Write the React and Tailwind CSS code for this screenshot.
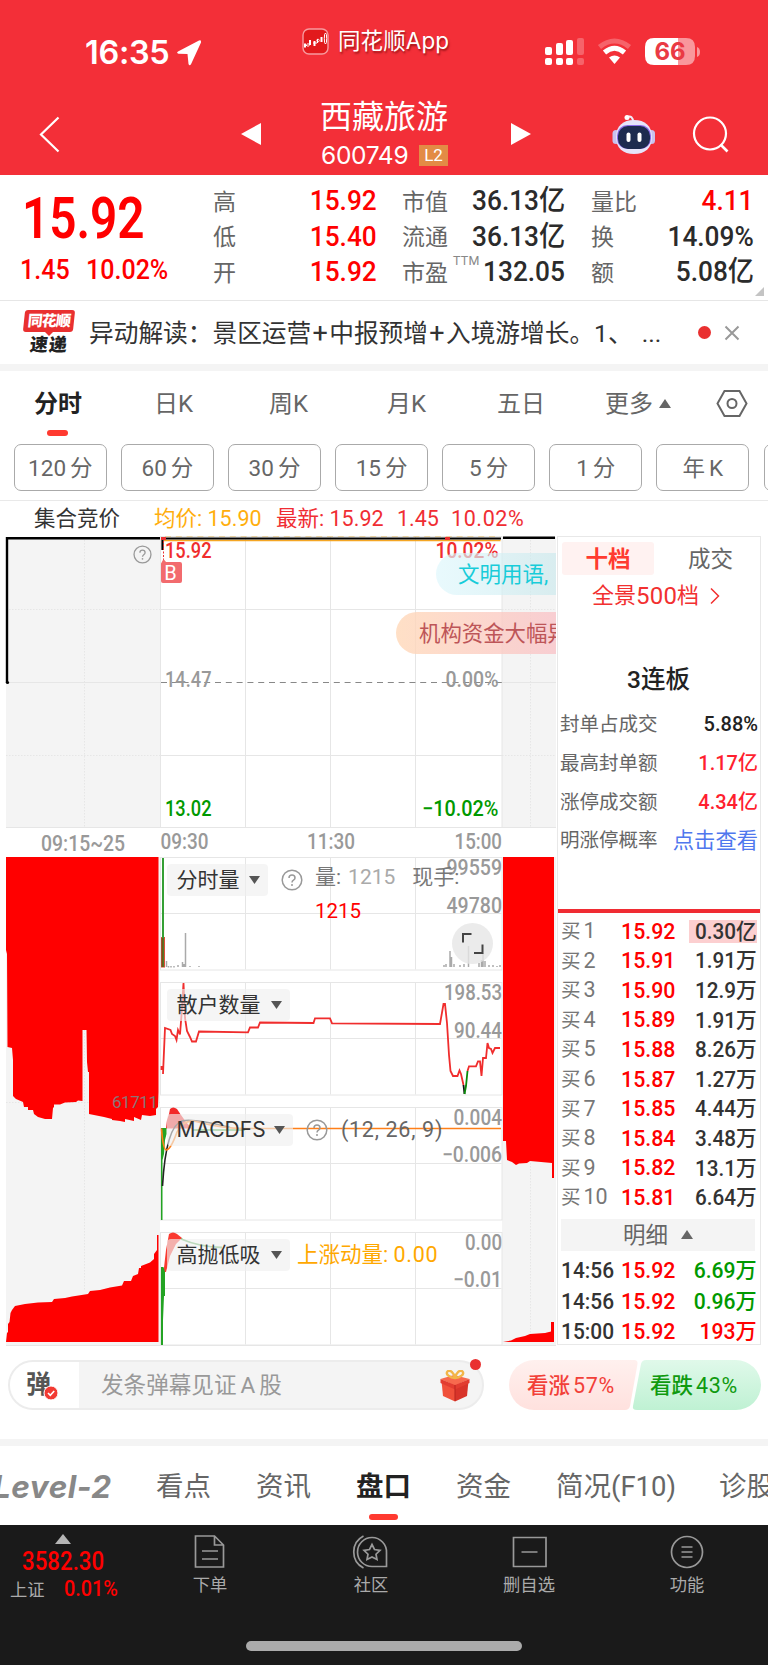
import { clsx } from 'clsx';

const PERIODS = [
  ['120', '分'],
  ['60', '分'],
  ['30', '分'],
  ['15', '分'],
  ['5', '分'],
  ['1', '分'],
  ['年', 'K'],
];

const BIDS = [
  { level: 1, price: '15.92', amount: '0.30亿' },
  { level: 2, price: '15.91', amount: '1.91万' },
  { level: 3, price: '15.90', amount: '12.9万' },
  { level: 4, price: '15.89', amount: '1.91万' },
  { level: 5, price: '15.88', amount: '8.26万' },
  { level: 6, price: '15.87', amount: '1.27万' },
  { level: 7, price: '15.85', amount: '4.44万' },
  { level: 8, price: '15.84', amount: '3.48万' },
  { level: 9, price: '15.82', amount: '13.1万' },
  { level: 10, price: '15.81', amount: '6.64万' },
];

const TRADES = [
  { time: '14:56', price: '15.92', amount: '6.69万', up: false },
  { time: '14:56', price: '15.92', amount: '0.96万', up: false },
  { time: '15:00', price: '15.92', amount: '193万', up: true },
];

const LIMIT_STATS = [
  { label: '封单占成交', value: '5.88%', color: 'text-[#222]' },
  { label: '最高封单额', value: '1.17亿', color: 'text-[#ff1f2f]' },
  { label: '涨停成交额', value: '4.34亿', color: 'text-[#ff1f2f]' },
];

// Sub charts share one size; only the top edge changes.
const SUB_CHARTS = [857.5, 982.5, 1107.5, 1232.5];

/** Status bar: clock, app name, signal, wifi and battery. */
function StatusBar() {
  return (
    <div className="flex h-[90px] items-start font-[Inter] text-white">
      <div className="mt-[33px] ml-[85px] w-[217px] flex items-center">
        <span className="text-[32.500px] leading-[40px] font-semibold tracking-[-0.3px]">16:35</span>
        <svg className="ml-[6px]" width="26" height="28" viewBox="0 0 26 28" fill="white">
          <path d="M23 1.500 L2 12.500 Q0 14 2.500 14.800 L11.500 15 L12.500 25 Q13.500 27.500 15 25.200 L25 3.500 Q25.500 0.600 23 1.500Z" />
        </svg>
      </div>
      <div className="mt-[24px] w-[243px] flex items-center">
        <svg width="27" height="27" viewBox="0 0 27 27" fill="none">
          <rect x="1" y="1" width="25" height="25" rx="6" fill="#e21a1c" stroke="#f79a9e" strokeWidth="1.4" />
          <path d="M3 15.500v4M8 12v5M12.500 13v5M19.500 9v5" stroke="white" strokeWidth="2" />
          <path d="M2 17.500h3M15.500 11v4M11 15h4" stroke="white" strokeWidth="1" />
          <circle cx="6" cy="17" r="1.300" stroke="white" strokeWidth="0.8" />
          <circle cx="16" cy="12.500" r="1.300" stroke="white" strokeWidth="0.8" />
          <ellipse cx="23.500" cy="10.500" rx="1.200" ry="5.500" stroke="white" />
        </svg>
        <span className="ml-[9px] text-[22.500px] leading-[34px] tracking-[0.1px] font-['Inter','Noto_Sans_CJK_SC',sans-serif] [text-shadow:1px_2px_2px_rgba(90,0,0,0.55)]">
          同花顺App
        </span>
      </div>
      <svg className="mt-[38px]" width="156" height="28" viewBox="0 0 156 28" fill="white">
        <rect x="0" y="9" width="7" height="8" rx="2" />
        <rect x="11" y="5" width="7" height="12" rx="2" />
        <rect x="21" y="2" width="7" height="15" rx="2" />
        <rect x="32" y="0" width="7" height="17" rx="2" opacity="0.25" />
        <rect x="0" y="20" width="7" height="7" rx="2" />
        <rect x="11" y="20" width="7" height="7" rx="2" />
        <rect x="21" y="20" width="7" height="7" rx="2" />
        <rect x="32" y="20" width="7" height="7" rx="2" opacity="0.25" />
        <path d="M54.500 9 Q69.500 -3 84.500 9" fill="none" stroke="white" strokeWidth="5" opacity="0.25" />
        <path d="M59.500 14.500 Q69.500 6 79.500 14.500" fill="none" stroke="white" strokeWidth="5" />
        <path d="M64 19.500 Q69.500 15.500 75 19.500 L69.500 26Z" />
        <path d="M109 0H133V27H109Q100 27 100 18V9Q100 0 109 0Z" />
        <path d="M133 0H141Q150 0 150 9V18Q150 27 141 27H133Z" opacity="0.5" />
        <path d="M152 9Q155 10 155 14T152 19Z" opacity="0.5" />
        <text x="125" y="22" fill="#ea3a44" fontFamily="Inter" fontWeight="700" fontSize="24" textAnchor="middle">
          66
        </text>
      </svg>
    </div>
  );
}

function RobotIcon() {
  return (
    <svg width="44" height="41" viewBox="0 0 44 41">
      <path d="M15 3 Q21 1 21 8" fill="none" stroke="#f0eefc" strokeWidth="2" />
      <circle cx="15" cy="3.500" r="2.500" fill="#fff" />
      <rect x="0.500" y="16" width="7" height="14" rx="3.500" fill="#c9c2ee" />
      <rect x="36" y="16" width="7" height="14" rx="3.500" fill="#c9c2ee" />
      <path d="M22 6C33 6 40 12 40 23S33 40 22 40 4 34 4 23 11 6 22 6Z" fill="#e6e4fa" />
      <rect x="5" y="11" width="34" height="24" rx="10.500" fill="#8a6be8" />
      <rect x="6" y="12" width="32" height="23" rx="10" fill="#1d2b4f" />
      <rect x="14.500" y="18.500" width="4" height="9.500" rx="2" fill="#fff" />
      <rect x="25.500" y="18.500" width="4" height="9.500" rx="2" fill="#fff" />
    </svg>
  );
}

function StockHeader() {
  return (
    <header className="h-[175px] shrink-0 bg-[#f32f38] text-white">
      <StatusBar />
      <div className="flex h-[85px] items-start">
        <svg className="mt-[26px] ml-[39px]" width="22" height="37" viewBox="0 0 22 37" fill="none">
          <path d="M19.500 1.500 L2 18.500 L19.500 35.500" stroke="white" strokeWidth="2.200" />
        </svg>
        <svg className="mt-[32px] ml-[180px]" width="20" height="24" viewBox="0 0 20 24" fill="white">
          <path d="M20 1V23L0 12Z" />
        </svg>
        <div className="ml-[59px] w-[129px]">
          <div className="mt-[8px] h-[38px] text-[32px] leading-[38px]">西藏旅游</div>
          <div className="mt-[7px] flex h-[25px] items-center">
            <span className="ml-[1px] font-[Inter] text-[24.500px] leading-[25px] tracking-[-0.3px]">600749</span>
            <span className="ml-auto mr-[1px] h-[21px] w-[29px] bg-[#e38b45] text-center text-[17px] leading-[21px]">L2</span>
          </div>
        </div>
        <svg className="mt-[32px] ml-[62px]" width="20" height="24" viewBox="0 0 20 24" fill="white">
          <path d="M0 1V23L20 12Z" />
        </svg>
        <div className="mt-[24px] ml-[81px]">
          <RobotIcon />
        </div>
        <svg className="mt-[26px] ml-[36px]" width="38" height="38" viewBox="0 0 38 38" fill="none">
          <circle cx="18" cy="17.500" r="16" stroke="white" strokeWidth="2.200" />
          <path d="M28.500 28.500 L35.500 35.500" stroke="white" strokeWidth="2.600" />
        </svg>
      </div>
    </header>
  );
}

/** One label / value line of the quote summary. */
function QuoteItem({ label, sup, value, red = false }) {
  return (
    <div className="flex h-[35.500px] items-center justify-between">
      <span className="relative top-[1px] text-[23px] text-[#666]">
        {label}
        {sup && <sup className="absolute top-[-2px] left-[51px] text-[12.500px] leading-none tracking-[0.3px] text-[#888]">{sup}</sup>}
      </span>
      <span className={clsx('inline-block origin-right scale-x-[0.92] text-[28.500px] font-medium', red ? 'text-[#ff0000]' : 'text-[#2b2b2b]')}>
        {value}
      </span>
    </div>
  );
}

function QuoteSummary() {
  return (
    <section className="relative flex h-[126px] shrink-0 border-b border-[#e6e6e6]">
      <div className="ml-[21px] w-[192px] text-[#ff0000]">
        <div className="mt-[14px] ml-[1px] h-[60px] origin-left scale-x-[0.83] text-[57.500px] leading-[60px] font-semibold">15.92</div>
        <div className="mt-[5px] -ml-[1px] flex h-[32px] origin-left scale-x-[0.91] gap-[18px] text-[27.500px] leading-[32px] font-medium">
          <span>1.45</span>
          <span>10.02%</span>
        </div>
      </div>
      <div className="mt-[9px] w-[164px]">
        <QuoteItem label="高" value="15.92" red />
        <QuoteItem label="低" value="15.40" red />
        <QuoteItem label="开" value="15.92" red />
      </div>
      <div className="mt-[9px] ml-[25px] w-[163px]">
        <QuoteItem label="市值" value="36.13亿" />
        <QuoteItem label="流通" value="36.13亿" />
        <QuoteItem label="市盈" sup="TTM" value="132.05" />
      </div>
      <div className="mt-[9px] ml-[26px] w-[163px]">
        <QuoteItem label="量比" value="4.11" red />
        <QuoteItem label="换" value="14.09%" />
        <QuoteItem label="额" value="5.08亿" />
      </div>
      <svg className="absolute right-[4px] bottom-[4px]" width="9" height="9" fill="#c4c4c4">
        <path d="M9 0V9H0Z" />
      </svg>
    </section>
  );
}

function NewsRow() {
  return (
    <section className="flex h-[70px] shrink-0 items-start border-b-[7px] border-[#f4f4f4]">
      <div className="mt-[9px] ml-[22px] flex w-[54px] flex-col items-center">
        <div className="h-[22px] w-[50px] -skew-x-6 rounded-[3px] bg-[#e93030] text-center text-[15px] leading-[22px] font-black tracking-[-0.8px] text-white">
          同花顺
        </div>
        <div className="h-0 w-0 border-x-[4px] border-t-[4px] border-x-transparent border-t-[#e93030]" />
        <div className="-mt-[1px] h-[20px] -skew-x-6 text-[18px] leading-[20px] font-black tracking-[1px] text-[#222]">速递</div>
      </div>
      <div className="mt-[15px] ml-[13px] w-[601px] text-[24.700px] leading-[34px] whitespace-nowrap text-[#333]">
        异动解读：景区运营
        <span className="inline-block w-[18px] text-center text-[27px]">+</span>
        中报预增
        <span className="inline-block w-[18px] text-center text-[27px]">+</span>
        入境游增长。1、
        <span className="ml-[9px]">...</span>
      </div>
      <div className="mt-[25px] ml-[8px] h-[13px] w-[13px] rounded-full bg-[#e93030]" />
      <svg className="mt-[24px] ml-[13px]" width="16" height="16" viewBox="0 0 16 16">
        <path d="M1.500 1.500L14.500 14.500M14.500 1.500L1.500 14.500" stroke="#999" strokeWidth="2" />
      </svg>
    </section>
  );
}

function PeriodTabs() {
  return (
    <section className="h-[130px] shrink-0 overflow-hidden border-b border-[#e9e9e9] text-[24px] text-[#666]">
      <div className="flex h-[73px] items-start">
        <div className="ml-[34px] w-[120px]">
          <div className="mt-[16px] leading-[34px] font-bold text-[#222]">分时</div>
          <div className="mt-[9px] ml-[13px] h-[6px] w-[21px] rounded-[3px] bg-[#ff3a30]" />
        </div>
        <div className="mt-[16px] w-[115px] leading-[34px]">日K</div>
        <div className="mt-[16px] w-[118px] leading-[34px]">周K</div>
        <div className="mt-[16px] w-[110px] leading-[34px]">月K</div>
        <div className="mt-[16px] w-[108px] leading-[34px]">五日</div>
        <div className="mt-[16px] flex w-[111px] items-center leading-[34px]">
          更多
          <svg className="ml-[6px]" width="12" height="10" fill="#666">
            <path d="M6 0L12 9H0Z" />
          </svg>
        </div>
        <svg className="mt-[18px]" width="32" height="29" viewBox="0 0 32 29" fill="none" stroke="#666" strokeWidth="2">
          <path d="M8.500 2H23.500L30.500 14.500L23.500 27H8.500L1.500 14.500Z" />
          <circle cx="16" cy="14.500" r="4.500" />
        </svg>
      </div>
      <div className="flex gap-[14.400px] pl-[14px]">
        {PERIODS.map(([amount, unit]) => (
          <div
            key={amount}
            className="flex h-[47px] w-[92.700px] shrink-0 justify-center gap-[4px] rounded-[7px] border border-[#aaa] text-[22.500px] leading-[46px]"
          >
            <span>{amount}</span>
            <span>{unit}</span>
          </div>
        ))}
        <div className="h-[47px] w-[92.700px] shrink-0 rounded-[7px] border border-[#aaa]" />
      </div>
    </section>
  );
}

function AxisText({ x, y, w, end = false, fill = '#999', size = 21.5, weight = 500, children }) {
  return (
    <text
      x={x}
      y={y}
      fill={fill}
      fontSize={size}
      fontWeight={weight}
      textLength={w}
      lengthAdjust="spacingAndGlyphs"
      textAnchor={end ? 'end' : 'start'}
    >
      {children}
    </text>
  );
}

/** Draws grids, price line, auction volumes and all four indicators. */
function ChartCanvas() {
  return (
    <svg width="557" height="810" viewBox="0 536 557 810" fontFamily="Roboto, 'Noto Sans CJK SC', sans-serif">
      {/* auction backgrounds */}
      <g fill="#f4f4f4">
        <rect x="6" y="537" width="154.500" height="290" />
        <rect x="6" y="857" width="154" height="489" />
        <rect x="502" y="537" width="54" height="290" />
        <rect x="502" y="857" width="54" height="489" />
      </g>

      {/* grid */}
      <g stroke="#e6e6e6" fill="none">
        <rect x="160.500" y="536.500" width="341.500" height="291" />
        <path d="M6 827.500H556M160.500 609.500H502M160.500 755.500H502M6 682.500H160M502 682.500H556" />
        <path d="M245.500 537V827M330.500 537V827M415.500 537V827" />
        {SUB_CHARTS.map((top) => (
          <g key={top}>
            <rect x="160.500" y={top} width="341.500" height="112.500" />
            <path d={`M245.500 ${top}v112M330.500 ${top}v112M415.500 ${top}v112M160.500 ${top + 56}h341`} />
          </g>
        ))}
        <path d="M6 1345.500H556" />
        <path
          d="M84.500 537V827M530.500 537V827M6 609.500H160M6 755.500H160M502 609.500H556M502 755.500H556M84.500 1030V1290M530.500 1160V1340M6 1102.500H160"
          strokeDasharray="1.500 1.500"
        />
      </g>

      {/* price line */}
      <path d="M161 682.500H502" stroke="#888" strokeDasharray="6 4.800" strokeWidth="1.200" />
      <path d="M165 536.500H500" stroke="#e5cfa0" strokeDasharray="6 4.800" />
      <path d="M164 540.500H500.500" stroke="#f5a623" strokeWidth="1.600" />
      <path d="M162.500 550V538.500H501" stroke="#000" strokeWidth="2.200" fill="none" />
      <path d="M7 683V538.300H160M503 537.800H555" stroke="#000" strokeWidth="2.400" fill="none" />
      <circle cx="7.500" cy="682.500" r="1.600" />
      <rect x="161" y="537" width="5" height="3" fill="#e93030" />
      <rect x="445" y="537" width="5" height="3" fill="#e93030" />
      <path d="M163.500 541V560" stroke="#e93030" strokeDasharray="2 1.500" />

      <AxisText x="165" y="557.500" w="46.500" fill="#f02d2d">15.92</AxisText>
      <AxisText x="498.500" y="557.500" w="63" fill="#f02d2d" end>10.02%</AxisText>
      <AxisText x="165" y="686.500" w="46.500">14.47</AxisText>
      <AxisText x="498.500" y="686.500" w="53" end>0.00%</AxisText>
      <AxisText x="165" y="815.500" w="46.500" fill="#009900">13.02</AxisText>
      <AxisText x="498.500" y="815.500" w="76.500" fill="#009900" end>−10.02%</AxisText>
      <AxisText x="41" y="850.500" w="84">09:15~25</AxisText>
      <AxisText x="160.500" y="849" w="48">09:30</AxisText>
      <AxisText x="307" y="849" w="48">11:30</AxisText>
      <AxisText x="502" y="849" w="47.500" end>15:00</AxisText>

      <path d="M161 563.500L163.500 559L166 562H180Q182 562 182 564V581Q182 583 180 583H163Q161 583 161 581Z" fill="#f26b6e" />
      <text x="170.500" y="580" fill="white" fontSize="20" textAnchor="middle">B</text>

      {/* unmatched auction volume */}
      <path
        fill="#ff0000"
        d="M6 857H158.500V1092L158 1107L156 1109V1115L150 1116L142 1115L141 1120L134 1117V1121L125 1119V1122L120 1121L112 1120V1119L104 1117L89 1114V1072H88L87 1062L86.500 1030H82.500V1101L78 1100.500L76 1102L65 1102.500L60 1104.500L54 1104.500V1107L53 1108L52 1119H45L38 1117L34 1114L33 1110H28V1107H24L23 1102L16 1099L13 1096V1060L12 1048L7.500 1047L7 954L6 950Z"
      />
      <path fill="#ff0000" d="M503 857H554V1178H552V1163L541 1162L530 1161L527 1163L519 1163.500L516 1165L512 1162L507 1160L506 1141H503Z" />
      <path
        fill="#ff0000"
        d="M6 1342L7 1333L8 1332V1324L9.500 1322L10.500 1313L12 1310L15 1306L25 1304L38 1302.500L52 1302L54 1299L65 1298L72 1296.500L88 1294L90 1291L100 1290L110 1287.500L122 1285.500L124 1281H131L133 1276L138 1274L139 1268H141V1266L150 1262.500L154 1259V1254L157 1250V1235H158.500V1342Z"
      />
      <path fill="#ff0000" d="M503 1342L511 1340.500L516 1338L525 1336L530 1334L545 1333L551 1331.500V1322H554V1342Z" />
      <text x="158" y="1107.500" fill="#8a7575" fontSize="17" textAnchor="end" textLength="46">61711</text>

      {/* 分时量 */}
      <rect x="161" y="937" width="4" height="30.500" fill="#e04b3c" />
      <path d="M163 858V967" stroke="#35a035" strokeWidth="2" />
      <path d="M162.500 938V967" stroke="#6d5a1a" strokeWidth="2" />
      <path
        d="M166.500 961v6M168.500 966v1.500M171 966v1.500M174 966v1.500M178 965v2M182.500 962v5M184 964v3M185.500 933v34M190 966v1M199 966v1M450 951v16M451.500 957v10M446 964v3M444 965v2M454 964v3M460 965v2M464 964v3M468.500 946v21M479 963v4M481.500 960v7M483 953v14M485 961v6M489 965v2M493 965v2M497 966v1M500 965v2"
        stroke="#aaa"
        strokeWidth="1.500"
      />
      <AxisText x="502" y="875" w="55.500" end>99559</AxisText>
      <AxisText x="502" y="912.500" w="55.500" end>49780</AxisText>

      {/* 散户数量 */}
      <g fill="none" stroke="#f02d2d" strokeWidth="1.800">
        <path d="M161.500 1070V1066M163 1074L165 1028L170.500 1030L172 1034L175 1036L176.500 1040L178 1030L180 1034.500L181.500 1015L183.500 983L185 1018L187 1031L190 1037L192 1041.500H196L199 1031.500L248 1032.300L250 1027.500H258L260 1022.500L313.500 1023L315 1018.300H330L332 1023.300L440 1024L443.500 1004H445L447 1023L449 1055L450.500 1071L453 1076H457.500L459.500 1070.500L461 1074L463.500 1085" />
        <path d="M467.500 1071L469 1066.300H476L478 1061.300H480L481.500 1076L483 1058H486L487.500 1043L489 1048L491 1049L492.500 1053L495 1048H500" />
      </g>
      <path d="M463.500 1085L464.500 1094" stroke="#111" strokeWidth="1.800" />
      <path d="M464.500 1094L466 1086L467.500 1071" stroke="#0a8a0a" strokeWidth="1.800" fill="none" />
      <AxisText x="502" y="1000" w="58" end>198.53</AxisText>
      <AxisText x="502" y="1037.500" w="48" end>90.44</AxisText>

      {/* MACDFS */}
      <path fill="#f22a2a" d="M166 1128.500L167 1120L169 1114L170 1109Q173 1106 177 1109L181 1115L186 1122L192 1128.500Z" />
      <path fill="#23a323" d="M161 1128H166.500V1134L165 1140L164 1154L162.500 1160V1220H161Z" />
      <path d="M162.500 1186Q166 1126 182 1121Q192 1118 230 1127.500" stroke="#222" strokeWidth="1.600" fill="none" />
      <path d="M192 1130H245" stroke="#5cb85c" strokeWidth="1.800" />
      <path d="M161.500 1128.500Q163 1150 166.500 1150Q171 1149 177 1132Q184 1117 200 1122.500Q222 1128.500 245 1128.500H501" stroke="#ff7f18" strokeWidth="1.700" fill="none" />
      <AxisText x="502" y="1125" w="48.500" end>0.004</AxisText>
      <AxisText x="502" y="1162" w="60" end>−0.006</AxisText>

      {/* 高抛低吸 */}
      <path fill="#fa3a30" d="M163.500 1272L166 1250L169 1234Q173 1231 177 1234L182 1238L176 1244L170 1256L166 1272Z" />
      <path fill="#23a323" d="M161 1267H163.500L165 1272V1296H164L163 1320V1345H161Z" />
      <path d="M181 1239Q200 1247 222 1247.500" stroke="#5cb05c" strokeWidth="1.800" fill="none" />
      <AxisText x="502" y="1250" w="37" end>0.00</AxisText>
      <AxisText x="502" y="1287" w="49" end>−0.01</AxisText>
    </svg>
  );
}

function HelpIcon({ className }) {
  return (
    <svg className={className} viewBox="0 0 22 22" fill="none">
      <circle cx="11" cy="11" r="9.800" stroke="#999" strokeWidth="1.500" />
      <path d="M8 9Q8 6 11 6T14 9Q14 10.300 12.500 11.200Q11 12.200 11 13.500" stroke="#999" strokeWidth="1.500" />
      <circle cx="11" cy="16" r="1" fill="#999" />
    </svg>
  );
}

/** Drop-down chip naming the indicator of a sub chart. */
function IndicatorChip({ label, className }) {
  return (
    <div
      className={clsx(
        "flex h-[32px] items-center justify-between rounded-[4px] bg-[#efefef]/65 pr-[8px] pl-[9.500px] font-['Inter','Noto_Sans_CJK_SC',sans-serif] text-[21px] leading-[32px] text-[#333]",
        className,
      )}
    >
      {label}
      <svg width="11" height="8" fill="#555">
        <path d="M0 0H11L5.500 8Z" />
      </svg>
    </div>
  );
}

function ChartArea() {
  return (
    <div className="relative h-[810px] w-[557px] shrink-0 overflow-hidden">
      <ChartCanvas />
      <HelpIcon className="absolute top-[8.500px] left-[132.500px] h-[19px] w-[19px]" />

      {/* bullet comments floating over the price chart */}
      <div className="absolute top-[17px] left-[436px] h-[42px] w-[120px] overflow-hidden rounded-l-full bg-linear-to-r from-[#dff7fc]/70 to-[#c6e8ec]/60 pl-[22px] text-[21.500px] leading-[44px] whitespace-nowrap text-[#18ccd9]">
        文明用语,
      </div>
      <div className="absolute top-[76px] left-[396px] h-[42px] w-[160px] overflow-hidden rounded-l-full bg-linear-to-r from-[#ffd8b8]/80 to-[#f9c4c9]/80 pl-[23px] text-[21.400px] leading-[44px] whitespace-nowrap text-[#bd5558]">
        机构资金大幅异
      </div>

      <IndicatorChip label="分时量" className="absolute top-[328px] left-[167px] w-[101px]" />
      <HelpIcon className="absolute top-[333px] left-[281px] h-[22px] w-[22px]" />
      <div className="absolute top-[325px] left-[315px] flex text-[21px] leading-[32px] text-[#777]">
        <span>量:</span>
        <span className="ml-[7px] text-[#aaa]">1215</span>
        <span className="ml-[17px]">现手:</span>
      </div>
      <div className="absolute top-[359px] left-[315px] text-[20.500px] leading-[32px] text-[#ff0000]">1215</div>
      <svg className="absolute top-[387px] left-[452px]" width="41" height="41" viewBox="0 0 41 41" fill="none">
        <circle cx="20.500" cy="20.500" r="20.500" fill="#e6e6e6" fillOpacity="0.8" />
        <path d="M11 19.500V11H19.500M22 30H30.500V21.500" stroke="#444" strokeWidth="2" />
      </svg>

      <IndicatorChip label="散户数量" className="absolute top-[453px] left-[167px] w-[123px]" />
      <IndicatorChip label="MACDFS" className="absolute top-[578px] left-[167px] w-[126px]" />
      <HelpIcon className="absolute top-[583px] left-[306px] h-[22px] w-[22px]" />
      <div className="absolute top-[578px] left-[341px] text-[21.500px] leading-[32px] tracking-[0.7px] text-[#666]">(12, 26, 9)</div>
      <IndicatorChip label="高抛低吸" className="absolute top-[703px] left-[167px] w-[123px]" />
      <div className="absolute top-[703px] left-[297px] text-[21.500px] leading-[32px] text-[#ffa800]">
        上涨动量: <span className="tracking-[0.7px]">0.00</span>
      </div>
    </div>
  );
}

function OrderBook() {
  return (
    <aside className="flex h-[809px] w-[204px] shrink-0 flex-col border border-[#e8e8e8]">
      <div className="mt-[5px] flex h-[33px] pl-[4px] text-[22.500px] leading-[34px]">
        <div className="w-[92px] rounded-[3px] bg-[#fff2f1] text-center font-bold text-[#ff3b30]">十档</div>
        <div className="ml-[34px] text-[#666]">成交</div>
      </div>
      <div className="mt-[5px] flex h-[32px] items-center pl-[34px] text-[22px] leading-[32px] text-[#f23030]">
        全景<span className="text-[24px] tracking-[0.2px]">500</span>档
        <svg className="ml-[11px]" width="10" height="18" fill="none">
          <path d="M1 1.500L8.500 9L1 16.500" stroke="#f23030" strokeWidth="1.500" />
        </svg>
      </div>
      <div className="mt-[48px] h-[40px] pr-[1px] text-center text-[24.500px] leading-[40px] font-medium text-[#222]">3连板</div>
      <div className="mt-[5px] mr-[2px] ml-[2px] text-[19.500px] text-[#666]">
        {LIMIT_STATS.map((stat) => (
          <div key={stat.label} className="flex h-[38.900px] items-center justify-between">
            <span>{stat.label}</span>
            <span className={clsx('text-[20px] font-medium', stat.color)}>{stat.value}</span>
          </div>
        ))}
        <div className="flex h-[38.900px] items-center justify-between">
          <span>明涨停概率</span>
          <span className="text-[21.300px] text-[#4f77ee]">点击查看</span>
        </div>
      </div>
      <div className="mt-[48px] h-[4px] shrink-0 bg-[#f02c33]" />
      <div className="mt-[4px] mr-[3px] ml-[3px]">
        {BIDS.map((bid) => (
          <div key={bid.level} className="flex h-[29.600px] items-center text-[22px] leading-[29.600px] font-medium">
            <span className="w-[60px] text-[19.500px] font-normal whitespace-nowrap text-[#777]">
              买<span className="ml-[3px] text-[21.500px]">{bid.level}</span>
            </span>
            <span className="origin-left scale-x-[0.97] text-[#ff0000]">{bid.price}</span>
            <span
              className={clsx(
                'ml-auto h-[23px] w-[68px] text-right leading-[23px] text-[#333]',
                bid.level === 1 && 'bg-[#fccfd0]',
              )}
            >
              <span className="inline-block origin-right scale-x-[0.94]">{bid.amount}</span>
            </span>
          </div>
        ))}
      </div>
      <div className="mt-[6px] mr-[5px] ml-[3px] flex h-[32px] shrink-0 items-center justify-center bg-[#f4f4f4] text-[22.500px] leading-[32px] text-[#666]">
        明细
        <svg className="ml-[13px]" width="12" height="9" fill="#666">
          <path d="M6 0L12 9H0Z" />
        </svg>
      </div>
      <div className="mt-[5px] mr-[3px] ml-[3px]">
        {TRADES.map((trade, index) => (
          <div key={index} className="flex h-[30.400px] items-center text-[22px] font-medium text-[#333]">
            <span className="w-[60px] origin-left scale-x-[0.95]">{trade.time}</span>
            <span className="origin-left scale-x-[0.97] text-[#ff0000]">{trade.price}</span>
            <span className={clsx('ml-auto origin-right scale-x-[0.96]', trade.up ? 'text-[#ff0000]' : 'text-[#009900]')}>
              {trade.amount}
            </span>
          </div>
        ))}
      </div>
    </aside>
  );
}

function GiftIcon() {
  return (
    <svg width="30" height="32" viewBox="0 0 30 32">
      <path d="M1.500 11L15 15V31.500L3 26Z" fill="#f0503a" />
      <path d="M28.500 11L15 15V31.500L27 26Z" fill="#d8342a" />
      <path d="M0.500 9L14 5L29.500 9L15 15.500Z" fill="#f76a4e" />
      <path d="M0.500 9V13L15 19.500L29.500 13V9L15 15Z" fill="#e23d30" />
      <path d="M15 8C10 8 5 4 7.500 1.500S14 3 15 8C16 3 20 -1 22.500 1.500S20 8 15 8Z" fill="none" stroke="#f2b548" strokeWidth="2.400" />
      <path d="M15 15V31" stroke="#b9251f" strokeWidth="1" />
    </svg>
  );
}

function CommentBar() {
  return (
    <section className="flex h-[93px] shrink-0 items-start pt-[14px]">
      <div className="relative ml-[8px] flex h-[50px] w-[476px] rounded-full border-2 border-[#ececec] bg-[#f4f4f4]">
        <div className="w-[69px] rounded-l-full bg-white pl-[16px] text-[25px] leading-[45px] font-bold text-[#555]">弹</div>
        <svg className="absolute top-[23px] left-[33px]" width="16" height="16" viewBox="0 0 16 16">
          <circle cx="8" cy="8" r="7" fill="#f23a32" stroke="#fff" />
          <path d="M5 8L7.300 10.300L11.200 6" stroke="#fff" strokeWidth="1.600" fill="none" />
        </svg>
        <span className="ml-[22px] text-[22.600px] leading-[48px] text-[#999]">
          发条弹幕见证<span className="mx-[4px]">A</span>股
        </span>
        <div className="absolute top-[8px] right-[12px]">
          <GiftIcon />
        </div>
        <div className="absolute -top-[3px] right-[1px] h-[11px] w-[11px] rounded-full bg-[#e93030]" />
      </div>
      <div className="relative ml-[25px] h-[50px] w-[252px]">
        <svg className="absolute inset-0" width="252" height="50" viewBox="0 0 252 50">
          <defs>
            <linearGradient id="bull" x1="0" y1="0" x2="0" y2="1">
              <stop offset="0" stopColor="#fff0ee" />
              <stop offset="1" stopColor="#ffe1de" />
            </linearGradient>
            <linearGradient id="bear" x1="0" y1="0" x2="0" y2="1">
              <stop offset="0" stopColor="#e0f9ea" />
              <stop offset="1" stopColor="#bff1d3" />
            </linearGradient>
          </defs>
          <path d="M25 0H125Q129 0 128.500 4L121 46Q120 50 116 50H25A25 25 0 0 1 25 0Z" fill="url(#bull)" />
          <path d="M137 0H227A25 25 0 0 1 227 50H128Q123 50 124 46L132 4Q133 0 137 0Z" fill="url(#bear)" />
        </svg>
        <div className="relative flex text-[21.500px] leading-[51px] font-medium">
          <span className="ml-[18px] w-[123px] text-[#f24038]">
            看涨<span className="ml-[3px] font-normal tracking-[0.6px]">57%</span>
          </span>
          <span className="text-[#109a10]">
            看跌<span className="ml-[3px] font-normal tracking-[0.6px]">43%</span>
          </span>
        </div>
      </div>
    </section>
  );
}

function DetailTabs() {
  return (
    <section className="flex h-[86px] w-[768px] shrink-0 items-start overflow-hidden border-t-[7px] border-[#f4f4f4] text-[27.500px] leading-[38px] whitespace-nowrap text-[#666]">
      <div className="mt-[22px] -ml-[7px] w-[163px] shrink-0 font-[Inter] text-[31.500px] font-bold tracking-[0.500px] text-[#888] italic">Level-2</div>
      <div className="mt-[22px] w-[100px] shrink-0">看点</div>
      <div className="mt-[22px] w-[100px] shrink-0">资讯</div>
      <div className="mt-[22px] w-[100px] shrink-0">
        <div className="font-bold text-[#222]">盘口</div>
        <div className="mt-[8px] ml-[13px] h-[6px] w-[29px] rounded-[3px] bg-[#ff3a30]" />
      </div>
      <div className="mt-[22px] w-[100px] shrink-0">资金</div>
      <div className="mt-[22px] w-[163px] shrink-0">简况(F10)</div>
      <div className="mt-[22px] shrink-0">诊股</div>
    </section>
  );
}

function NavItem({ label, className, children }) {
  return (
    <div className={clsx('flex flex-col items-center text-[17.300px] leading-[24px] text-[#aaa]', className)}>
      <svg className="mb-[3px]" width="38" height="36" viewBox="0 0 38 36" fill="none" stroke="#999" strokeWidth="1.700">
        {children}
      </svg>
      {label}
    </div>
  );
}

function BottomNav() {
  return (
    <footer className="flex h-[140px] shrink-0 flex-col bg-[#1a1a1a]">
      <div className="flex h-[116px] items-start">
        <div className="flex w-[126px] flex-col items-center">
          <svg className="mt-[9px]" width="16" height="10" fill="#b5b5b5">
            <path d="M8 0L16 10H0Z" />
          </svg>
          <div className="mt-[4px] h-[28px] scale-x-[0.89] text-[25px] leading-[28px] font-medium text-[#ff0000]">3582.30</div>
          <div className="mt-[0px] flex w-[126px] items-center leading-[26px]">
            <span className="relative top-[1px] ml-[10px] text-[17.300px] text-[#aaa]">上证</span>
            <span className="ml-[19px] origin-left scale-x-[0.9] text-[22px] font-medium text-[#ff0000]">0.01%</span>
          </div>
        </div>
        <NavItem label="下单" className="mt-[9px] ml-[34px] w-[100px]">
          <path d="M4.500 2H23.500L32.500 11V33H4.500ZM23.500 2V11H32.500M11 17H27M11 25H27" />
        </NavItem>
        <NavItem label="社区" className="mt-[9px] ml-[61px] w-[100px]">
          <path d="M34.500 32.500H20.500A14.500 14.500 0 1 1 34.500 18.500ZM11.500 34A18 18 0 0 1 11.500 2" />
          <path d="M20 10.500L22.500 15.500L28 16.300L24 20.200L25 25.500L20 23L15 25.500L16 20.200L12 16.300L17.500 15.500Z" />
        </NavItem>
        <NavItem label="删自选" className="mt-[9px] ml-[58px] w-[100px]">
          <path d="M3.500 3.500H36V32.500H3.500ZM11.500 18H27.500" />
        </NavItem>
        <NavItem label="功能" className="mt-[9px] ml-[58px] w-[100px]">
          <circle cx="19" cy="18" r="15.500" />
          <path d="M13.500 13H24.500M13.500 18H24.500M13.500 23H24.500" />
        </NavItem>
      </div>
      <div className="ml-[246px] h-[10px] w-[276px] rounded-full bg-[#ababab]" />
    </footer>
  );
}

export default function App() {
  return (
    <div className="flex h-[1665px] w-[768px] flex-col overflow-hidden bg-white font-['Roboto','Noto_Sans_CJK_SC',sans-serif]">
      <StockHeader />
      <QuoteSummary />
      <NewsRow />
      <PeriodTabs />
      <div className="flex h-[35px] shrink-0 items-center text-[21.500px] leading-[37px] whitespace-nowrap">
        <span className="ml-[34px] w-[120px] text-[#333]">集合竞价</span>
        <span className="w-[122px] text-[#ffae0d]">均价: 15.90</span>
        <span className="w-[121px] text-[#f02d33]">最新: 15.92</span>
        <span className="w-[54px] text-[#f02d33]">1.45</span>
        <span className="tracking-[0.6px] text-[#f02d33]">10.02%</span>
      </div>
      <div className="flex h-[810px] shrink-0">
        <ChartArea />
        <OrderBook />
      </div>
      <CommentBar />
      <DetailTabs />
      <BottomNav />
    </div>
  );
}
